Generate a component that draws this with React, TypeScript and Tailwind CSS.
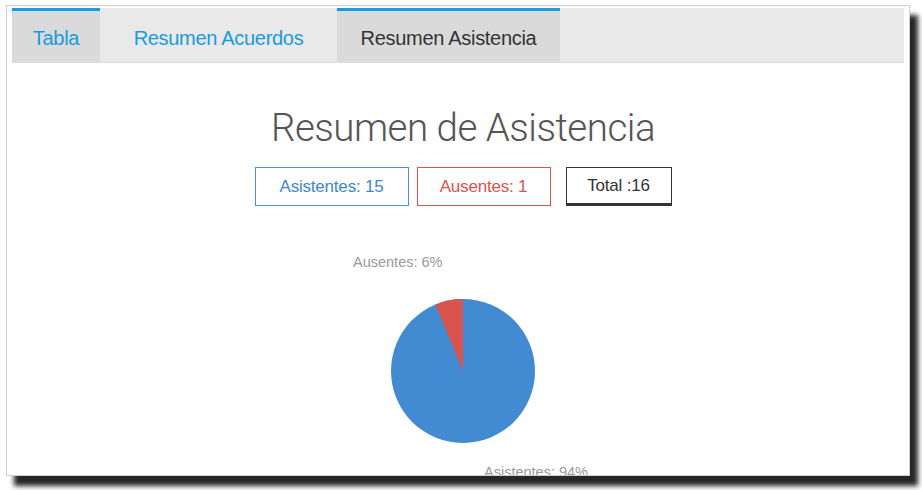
export default function App() {
  const tabs = [
    { label: "Tabla", active: true, dark: false, w: "w-[88px]" },
    { label: "Resumen Acuerdos", active: false, dark: false, w: "w-[237px]" },
    { label: "Resumen Asistencia", active: true, dark: true, w: "w-[223px]" },
  ];

  // slice for Ausentes: 6% going counterclockwise from 12 o'clock
  const r = 72;
  const cx = 72;
  const cy = 72;
  const angle = (0.0625 * 360 * Math.PI) / 180;
  const x = cx - r * Math.sin(angle);
  const y = cy - r * Math.cos(angle);

  return (
    <div className="min-h-screen bg-white pl-[6px] pt-[5px]" style={{ fontFamily: '"Liberation Sans", Arial, sans-serif' }}>
      <div className="h-[471px] w-[904px] overflow-hidden border border-[#cfcfcf] bg-white px-[5px] pt-[2px] shadow-[8px_10px_5px_rgba(0,0,0,0.85)]">
        <div className="flex h-[55px] border-b border-[#dcdcdc] bg-[#e9e9e9]">
          {tabs.map((t) => (
            <div
              key={t.label}
              className={`${t.w} flex items-center justify-center border-t-[3px] pt-[2px] text-[20px] tracking-[-0.3px] ${
                t.active ? "border-[#1a9ae0] bg-[#dadada]" : "border-transparent"
              } ${t.dark ? "text-[#333]" : "text-[#1a9ae0]"}`}
            >
              {t.label}
            </div>
          ))}
        </div>

        <div className="flex flex-col items-center pl-[10px]">
          <h1 className="mt-[41px] text-[38.5px] leading-[48px] font-light tracking-[-0.5px] text-[#555]" style={{ fontFamily: '"Roboto", "Liberation Sans", sans-serif' }}>
            Resumen de Asistencia
          </h1>
          <div className="mt-[15px] flex gap-[8px] text-[17px] tracking-[-0.2px]">
            <div className="flex h-[39px] w-[154px] items-center justify-center border border-[#4a8fd6] text-[#3f86cf]">Asistentes: 15</div>
            <div className="flex h-[39px] w-[134px] items-center justify-center border border-[#d9534f] text-[#d9534f]">Ausentes: 1</div>
            <div className="ml-[7px] flex h-[39px] w-[106px] items-center justify-center border border-b-[3px] border-[#333] text-[#333]">Total :16</div>
          </div>

          <div className="relative mt-[4px] h-[270px] w-[300px]">
            <span className="absolute left-[40px] top-[42px] text-[14.5px] text-[#999]">Ausentes: 6%</span>
            <svg className="absolute left-[78px] top-[89px]" width="144" height="144" viewBox="0 0 144 144">
              <circle cx={cx} cy={cy} r={r} fill="#428bd2" />
              <path d={`M ${cx} ${cy} L ${cx} ${cy - r} A ${r} ${r} 0 0 0 ${x} ${y} Z`} fill="#d9534f" />
            </svg>
            <span className="absolute left-[171px] top-[252px] text-[14.5px] text-[#999]">Asistentes: 94%</span>
          </div>
        </div>
      </div>
    </div>
  );
}
